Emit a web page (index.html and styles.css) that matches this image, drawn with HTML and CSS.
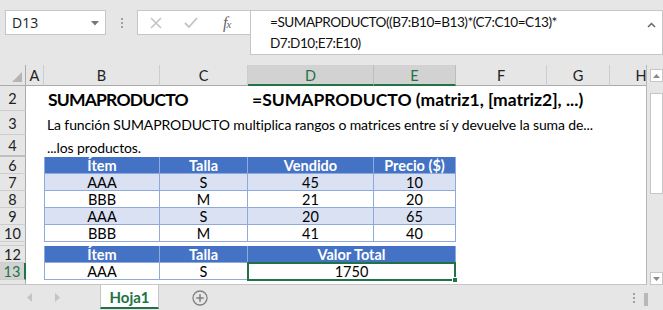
FILE: index.html
```html
<!DOCTYPE html>
<html lang="es">
<head>
<meta charset="utf-8">
<title>SUMAPRODUCTO</title>
<link rel="stylesheet" href="styles.css">
</head>
<body>
<div class="app">
  <div class="toolbar">
    <div class="namebox">
      <span>D13</span>
      <svg class="dd" width="8" height="5" viewBox="0 0 8 5"><path d="M0 0H8L4 4.5Z" fill="#777"/></svg>
    </div>
    <div class="grip"><i></i><i></i><i></i></div>
    <div class="fxbox">
      <svg class="ico" width="12" height="12" viewBox="0 0 12 12"><path d="M1 1L11 11M11 1L1 11" stroke="#c3c3c3" stroke-width="1.6" fill="none"/></svg>
      <svg class="ico" width="14" height="12" viewBox="0 0 14 12"><path d="M1 6L5 10L13 1" stroke="#c3c3c3" stroke-width="1.8" fill="none"/></svg>
      <span class="fx">f<small>x</small></span>
    </div>
    <div class="formula">
      <div class="ftext">=SUMAPRODUCTO((B7:B10=B13)*(C7:C10=C13)*<br>D7:D10;E7:E10)</div>
      <svg class="caret" width="9" height="6" viewBox="0 0 9 6"><path d="M1 5L4.5 1.5L8 5" stroke="#666" stroke-width="1.5" fill="none"/></svg>
    </div>
  </div>

  <div class="main">
    <div class="sheet">
      <div class="grid">
        <!-- column headers -->
        <div class="ch corner"><span class="tri"></span></div>
        <div class="ch">A</div>
        <div class="ch">B</div>
        <div class="ch">C</div>
        <div class="ch sel">D</div>
        <div class="ch sel">E</div>
        <div class="ch">F</div>
        <div class="ch">G</div>
        <div class="ch">H</div>

        <!-- row 2 -->
        <div class="rh">2</div>
        <div class="c"></div>
        <div class="c s2 title t1">SUMAPRODUCTO</div>
        <div class="c s5 title">=SUMAPRODUCTO (matriz1, [matriz2], ...)</div>

        <!-- row 3 -->
        <div class="rh">3</div>
        <div class="c"></div>
        <div class="c s7 txt">La función SUMAPRODUCTO multiplica rangos o matrices entre sí y devuelve la suma de...</div>

        <!-- row 4 -->
        <div class="rh hid">4</div>
        <div class="c"></div>
        <div class="c s7 txt">...los productos.</div>

        <!-- row 6 -->
        <div class="rh">6</div>
        <div class="c"></div>
        <div class="th first top">Ítem</div>
        <div class="th top">Talla</div>
        <div class="th top">Vendido</div>
        <div class="th top">Precio ($)</div>
        <div class="c s3"></div>

        <!-- row 7 -->
        <div class="rh">7</div>
        <div class="c"></div>
        <div class="td first band">AAA</div>
        <div class="td band">S</div>
        <div class="td band">45</div>
        <div class="td band">10</div>
        <div class="c s3"></div>

        <!-- row 8 -->
        <div class="rh">8</div>
        <div class="c"></div>
        <div class="td first">BBB</div>
        <div class="td">M</div>
        <div class="td">21</div>
        <div class="td">20</div>
        <div class="c s3"></div>

        <!-- row 9 -->
        <div class="rh">9</div>
        <div class="c"></div>
        <div class="td first band">AAA</div>
        <div class="td band">S</div>
        <div class="td band">20</div>
        <div class="td band">65</div>
        <div class="c s3"></div>

        <!-- row 10 -->
        <div class="rh">10</div>
        <div class="c"></div>
        <div class="td first">BBB</div>
        <div class="td">M</div>
        <div class="td">41</div>
        <div class="td">40</div>
        <div class="c s3"></div>

        <!-- row 11 (thin) -->
        <div class="rh"></div>
        <div class="c s8"></div>

        <!-- row 12 -->
        <div class="rh">12</div>
        <div class="c"></div>
        <div class="th first top">Ítem</div>
        <div class="th top">Talla</div>
        <div class="th top s2">Valor Total</div>
        <div class="c s3"></div>

        <!-- row 13 -->
        <div class="rh sel">13</div>
        <div class="c"></div>
        <div class="td first">AAA</div>
        <div class="td">S</div>
        <div class="td s2 active">1750<span class="handle"></span></div>
        <div class="c s3"></div>

        <!-- row 14 (partial) -->
        <div class="rh"></div>
        <div class="c s8"></div>
      </div>
    </div>
    <div class="vscroll">
      <div class="sbtn up"><svg width="7" height="4" viewBox="0 0 7 4"><path d="M0 4L3.5 0L7 4Z" fill="#8a8a8a"/></svg></div>
      <div class="thumb"></div>
      <div class="track"></div>
      <div class="sbtn down"><svg width="7" height="4" viewBox="0 0 7 4"><path d="M0 0L3.5 4L7 0Z" fill="#8a8a8a"/></svg></div>
    </div>
  </div>

  <div class="tabbar">
    <div class="navs">
      <svg width="5" height="9" viewBox="0 0 5 9"><path d="M5 0L0 4.5L5 9Z" fill="#c4c4c4"/></svg>
      <svg width="5" height="9" viewBox="0 0 5 9"><path d="M0 0L5 4.5L0 9Z" fill="#c4c4c4"/></svg>
    </div>
    <div class="tab">Hoja1</div>
    <div class="add">
      <svg width="16" height="16" viewBox="0 0 16 16"><circle cx="8" cy="8" r="7" stroke="#808080" stroke-width="1.3" fill="none"/><path d="M8 4.2V11.8M4.2 8H11.8" stroke="#808080" stroke-width="1.6"/></svg>
    </div>
    <div class="spacer"></div>
    <div class="grip2"><i></i><i></i><i></i></div>
    <div class="hbar"></div>
  </div>
</div>
</body>
</html>
```

FILE: styles.css
```css
* { box-sizing: border-box; }
html, body { margin: 0; padding: 0; }
body {
  width: 663px;
  height: 310px;
  overflow: hidden;
  background: #e6e6e6;
  font-family: Lato, "Liberation Sans", sans-serif;
  color: #000;
}
.app { width: 663px; height: 310px; display: flex; flex-direction: column; }

/* ---------- toolbar ---------- */
.toolbar {
  height: 65px;
  display: flex;
  align-items: flex-start;
  padding-top: 10px;
  padding-left: 5px;
}
.namebox {
  width: 101px;
  height: 25px;
  background: #fff;
  border: 1px solid #c6c6c6;
  display: flex;
  align-items: center;
  justify-content: space-between;
  padding: 0 6px 0 6px;
  font-family: "Open Sans", "DejaVu Sans", sans-serif;
  font-size: 14px;
  color: #222;
}
.namebox .dd { margin-top: 1px; }
.grip {
  width: 31px;
  height: 25px;
  display: flex;
  flex-direction: column;
  align-items: center;
  justify-content: center;
  gap: 2px;
}
.grip i, .grip2 i { display: block; width: 2px; height: 2px; background: #a0a0a0; }
.fxbox {
  width: 114px;
  height: 25px;
  background: #fff;
  border: 1px solid #c6c6c6;
  display: flex;
  align-items: center;
  padding-left: 12px;
  gap: 0;
}
.fxbox .ico:nth-child(1) { margin-right: 22px; }
.fxbox .ico:nth-child(2) { margin-right: 25px; }
.fx {
  font-family: "Liberation Serif", serif;
  font-style: italic;
  font-size: 16px;
  color: #666;
  letter-spacing: -1px;
}
.fx small { font-size: 11px; }
.formula {
  width: 413px;
  height: 45px;
  margin-left: -1px;
  background: #fff;
  border: 1px solid #c6c6c6;
  display: flex;
  justify-content: space-between;
  padding: 1px 6px 0 19px;
}
.ftext { font-size: 13.6px; letter-spacing: -0.5px; line-height: 21px; color: #111; }
.caret { margin-top: 10px; }

/* ---------- main ---------- */
.main { height: 220px; display: flex; }
.sheet {
  width: 647px;
  height: 220px;
  overflow: hidden;
  background: #fff;
  border-right: 1px solid #b8b8b8;
  border-bottom: 1px solid #c6c6c6;
}
.grid {
  display: grid;
  grid-template-columns: 26px 18px 116px 88px 126px 82px 91px 63px 63px;
  grid-template-rows: 21px 25px 24px 22px 17px 17px 17px 17px 17px 4px 17px 17px 5px;
  width: 690px;
}
.ch {
  background: #e6e6e6;
  border-right: 1px solid #cdcdcd;
  border-bottom: 1px solid #ababab;
  display: flex;
  align-items: center;
  justify-content: center;
  font-size: 14.5px;
  color: #222;
  padding-top: 1px;
}
.ch.sel {
  background: #d2d2d2;
  color: #217346;
  border-bottom: 2px solid #217346;
  border-right-color: #bdbdbd;
}
.corner { position: relative; border-right-color: #ababab; }
.tri {
  position: absolute;
  right: 3px;
  bottom: 3px;
  width: 0; height: 0;
  border-left: 10px solid transparent;
  border-bottom: 10px solid #b4b4b4;
}
.rh {
  background: #e6e6e6;
  border-right: 1px solid #ababab;
  border-bottom: 1px solid #cdcdcd;
  display: flex;
  align-items: center;
  justify-content: center;
  font-size: 14.5px;
  color: #222;
  padding-top: 1px;
}
.rh.hid { border-bottom: 2px solid #c0c0c0; }
.rh.sel {
  background: #d2d2d2;
  color: #217346;
  border-right: 2px solid #217346;
}
.c { background: #fff; white-space: nowrap; overflow: visible; }
.s2 { grid-column: span 2; }
.s3 { grid-column: span 3; }
.s5 { grid-column: span 5; }
.s7 { grid-column: span 7; }
.s8 { grid-column: span 8; }
.title {
  font-weight: 700;
  font-size: 17.5px;
  display: flex;
  align-items: center;
  padding-left: 4px;
  padding-top: 2px;
}
.title.t1 { letter-spacing: -0.8px; }
.txt {
  font-size: 14px;
  letter-spacing: -0.12px;
  display: flex;
  align-items: center;
  padding-left: 3px;
  padding-top: 3px;
}
.th, .td {
  display: flex;
  align-items: center;
  justify-content: center;
  font-size: 14.5px;
  border-right: 1px solid #8ea9db;
  border-bottom: 1px solid #8ea9db;
  padding-top: 1px;
}
.th.first, .td.first { border-left: 1px solid #8ea9db; }
.th {
  background: #4472c4;
  color: #fff;
  font-weight: 700;
}
.td { background: #fff; }
.td.band { background: #d9e1f2; }
.active { position: relative; }
.active::after {
  content: "";
  position: absolute;
  left: -1px; top: -1px; right: -1px; bottom: -2px;
  border: 2px solid #217346;
}
.handle {
  position: absolute;
  right: -3px;
  bottom: -4px;
  width: 6px;
  height: 6px;
  background: #217346;
  border: 1px solid #fff;
  z-index: 2;
}

/* ---------- vertical scrollbar ---------- */
.vscroll {
  width: 13px;
  margin-left: 3px;
  height: 220px;
  display: flex;
  flex-direction: column;
  padding-top: 4px;
}
.sbtn {
  height: 13px;
  background: #fff;
  border: 1px solid #c6c6c6;
  display: flex;
  align-items: center;
  justify-content: center;
}
.thumb {
  margin-top: 11px;
  height: 101px;
  background: #fff;
  border: 1px solid #c6c6c6;
}
.track { flex: 1; }

/* ---------- tab bar ---------- */
.tabbar {
  height: 25px;
  display: flex;
  align-items: stretch;
}
.navs {
  width: 100px;
  display: flex;
  align-items: center;
  gap: 23px;
  padding-left: 27px;
}
.tab {
  width: 59px;
  background: #fff;
  border-left: 1px solid #c6c6c6;
  border-right: 1px solid #c6c6c6;
  border-bottom: 2px solid #217346;
  margin-bottom: 1px;
  display: flex;
  align-items: center;
  justify-content: center;
  color: #217346;
  font-weight: 700;
  font-size: 15px;
  padding-top: 1px;
}
.add {
  width: 82px;
  display: flex;
  align-items: center;
  justify-content: center;
  padding-left: 0;
}
.spacer { flex: 1; }
.grip2 {
  width: 20px;
  display: flex;
  flex-direction: column;
  align-items: center;
  justify-content: center;
  gap: 2px;
}
.hbar {
  width: 4px;
  margin: 8px 15px 4px 0;
  background: #b8b8b8;
}
```
